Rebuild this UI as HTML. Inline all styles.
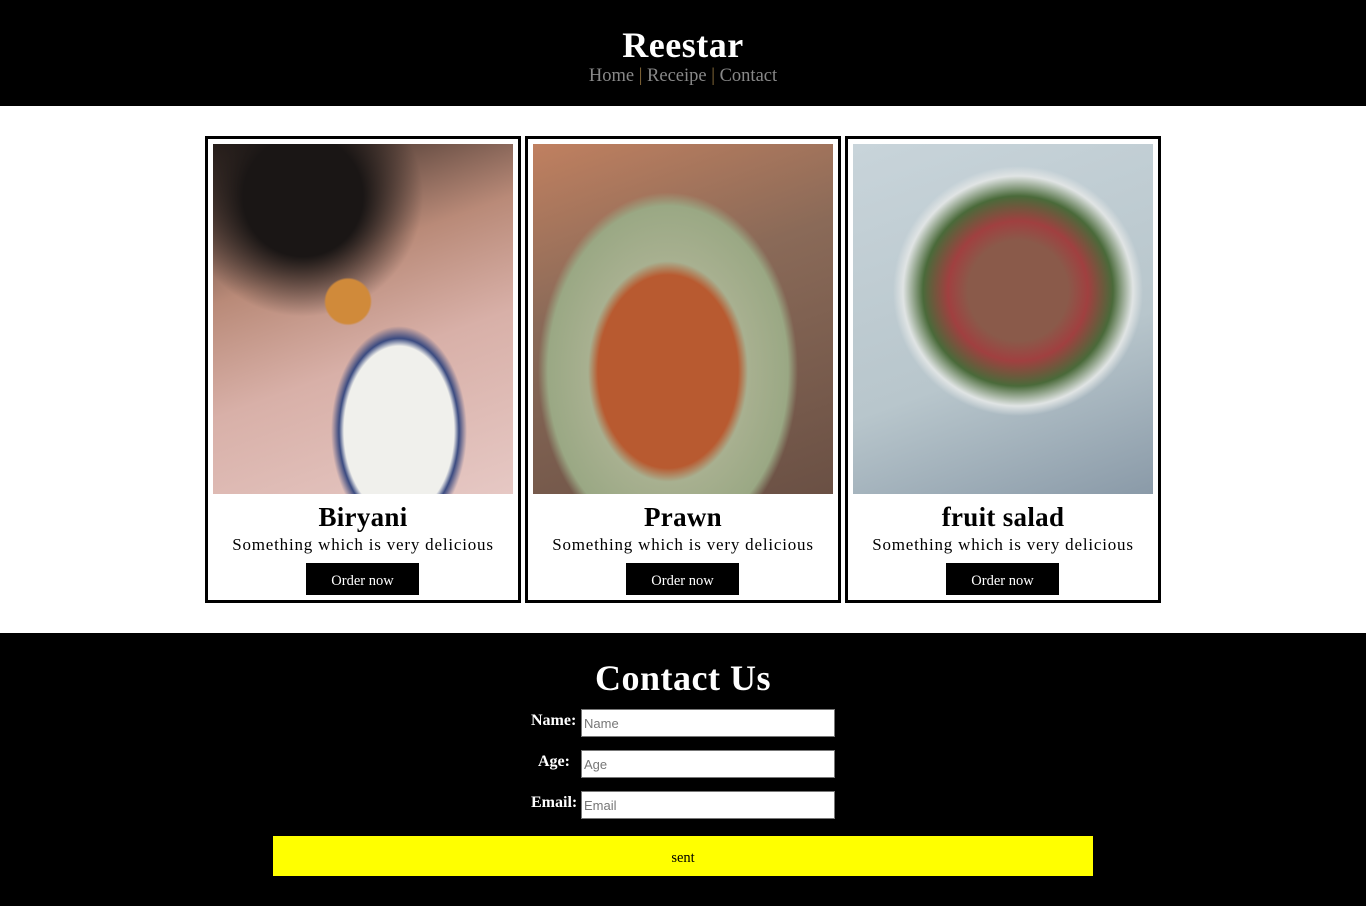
<!DOCTYPE html><html><head><style>
*{box-sizing:border-box;margin:0;padding:0}
body{width:1366px;height:906px;background:#fff;font-family:"Liberation Serif","DejaVu Serif",serif;overflow:hidden;position:relative}
.hdr{position:absolute;left:0;top:0;width:1366px;height:106px;background:#000;text-align:center;color:#fff}
.hdr h1{position:absolute;top:24px;width:100%;font-size:36px;font-weight:bold;letter-spacing:0.5px}
.nav{position:absolute;top:66px;width:100%;font-size:18.5px;color:#888}
.nav span{color:#8a6d3b}
.card{position:absolute;top:136px;width:316px;height:467px;border:3px solid #000;text-align:center}
.img{position:absolute;left:5px;top:5px;width:300px;height:350px}
.card h2{position:absolute;top:363px;width:100%;font-size:27px;font-weight:bold;letter-spacing:0.3px}
.card p{position:absolute;top:396px;width:100%;font-size:17px;letter-spacing:0.8px}
.card b{position:absolute;top:424px;left:98px;width:113px;height:32px;background:#000;color:#fff;font-weight:normal;font-size:14.5px;line-height:36px}
.ft{position:absolute;left:0;top:633px;width:1366px;height:273px;background:#000;color:#fff}
.ft h2{position:absolute;top:24px;width:100%;text-align:center;font-size:36px;letter-spacing:0.5px}
.lb{position:absolute;font-size:16px;font-weight:bold}
.in{position:absolute;left:581px;width:254px;height:28px;background:#fff;border:1px solid #777;color:#777;font-family:"Liberation Sans",sans-serif;font-size:13px;padding:6px 2px}
.btn{position:absolute;left:273px;top:203px;width:820px;height:40px;background:#ff0;color:#000;text-align:center;line-height:45px;font-size:14.5px}
</style></head><body>
<div class="hdr"><h1>Reestar</h1><div class="nav">Home <span>|</span> Receipe <span>|</span> Contact</div></div>
<div class="card" style="left:205px"><div class="img" style="background:radial-gradient(circle at 45% 45%,#d08a3a 0 22px,transparent 24px),radial-gradient(ellipse at 62% 82%,#f0f0ec 0 55px,#3a4a80 60px,transparent 68px),radial-gradient(circle at 30% 15%,#1a1615 0 60px,transparent 120px),linear-gradient(160deg,#2a201c 0%,#b98a78 35%,#d8b0a8 60%,#e6c8c4 100%)"></div><h2>Biryani</h2><p>Something which is very delicious</p><b>Order now</b></div>
<div class="card" style="left:525px"><div class="img" style="background:radial-gradient(ellipse at 45% 65%,#b85a30 0 70px,#a8b090 80px,#9aa884 120px,transparent 130px),linear-gradient(160deg,#c08060 0%,#8a6a58 40%,#6a5044 100%)"></div><h2>Prawn</h2><p>Something which is very delicious</p><b>Order now</b></div>
<div class="card" style="left:845px"><div class="img" style="background:radial-gradient(circle at 55% 42%,#8a5a4a 0 50px,#a04040 70px,#4a6a3a 95px,#e0e4e4 115px,transparent 125px),linear-gradient(160deg,#c8d4da 0%,#b8c6cc 60%,#8a9aa8 100%)"></div><h2>fruit salad</h2><p>Something which is very delicious</p><b>Order now</b></div>
<div class="ft"><h2>Contact Us</h2>
<div class="lb" style="left:531px;top:79px">Name:</div><div class="in" style="top:76px">Name</div>
<div class="lb" style="left:538px;top:120px">Age:</div><div class="in" style="top:117px">Age</div>
<div class="lb" style="left:531px;top:161px">Email:</div><div class="in" style="top:158px">Email</div>
<div class="btn">sent</div></div>
</body></html>
